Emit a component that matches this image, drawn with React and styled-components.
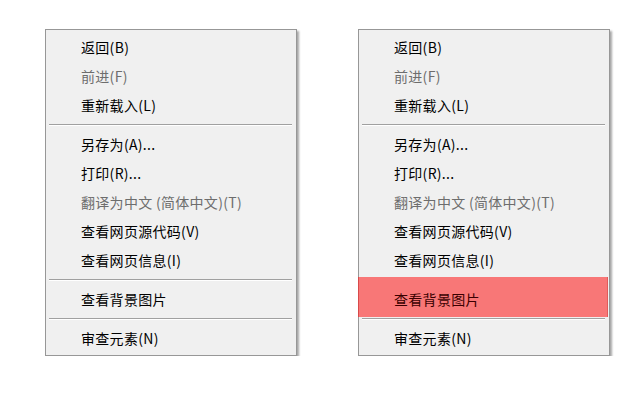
import React from 'react';
import styled, { createGlobalStyle } from 'styled-components';

const GlobalStyle = createGlobalStyle`
	html, body {
		margin: 0;
		background: #fff;
	}
`;

const Page = styled.div`
	display: flex;
	gap: 61px;
	padding: 29px 0 0 45px;
	font-family: "Noto Sans CJK SC", "Microsoft YaHei", sans-serif;
`;

const Menu = styled.div`
	box-sizing: border-box;
	width: 252px;
	padding: 3px 0 2px;
	background: #f0f0f0;
	border: 1px solid #979797;
	box-shadow: 2px 2px 2px rgba(0, 0, 0, 0.35);
`;

const Item = styled.div`
	position: relative;
	height: 29px;
	line-height: 29px;
	padding-left: 35px;
	font-size: 14px;
	letter-spacing: 0.3px;
	color: ${props => (props.disabled ? '#6d6d6d' : '#000')};
	white-space: nowrap;

	${props =>
		props.active &&
		`
		color: #3a0000;
		&::before {
			content: '';
			position: absolute;
			top: -8px;
			bottom: -3px;
			left: -1px;
			right: 1px;
			background: #f87777;
			border-left: 1px solid #d84a4a;
			border-right: 1px solid #e05a5a;
			z-index: 0;
		}
		span {
			position: relative;
			z-index: 1;
		}
	`}
`;

const Separator = styled.div`
	height: 10px;
	display: flex;
	align-items: center;
	padding: 0 4px 0 3px;

	&::after {
		content: '';
		flex: 1;
		border-top: 1px solid #a0a0a0;
		border-bottom: 1px solid #fff;
	}
`;

const groups = [
	[
		{ text: '返回(B)' },
		{ text: '前进(F)', disabled: true },
		{ text: '重新载入(L)' },
	],
	[
		{ text: '另存为(A)...' },
		{ text: '打印(R)...' },
		{ text: '翻译为中文 (简体中文)(T)', disabled: true },
		{ text: '查看网页源代码(V)' },
		{ text: '查看网页信息(I)' },
	],
	[{ text: '查看背景图片', key: 'bg' }],
	[{ text: '审查元素(N)' }],
];

const ContextMenu = ({ activeKey }) => (
	<Menu>
		{groups.map((group, gi) => (
			<React.Fragment key={gi}>
				{gi > 0 && <Separator />}
				{group.map(item => (
					<Item
						key={item.text}
						disabled={item.disabled}
						active={activeKey && item.key === activeKey}
					>
						<span>{item.text}</span>
					</Item>
				))}
			</React.Fragment>
		))}
	</Menu>
);

const App = () => (
	<>
		<GlobalStyle />
		<Page>
			<ContextMenu />
			<ContextMenu activeKey="bg" />
		</Page>
	</>
);

export default App;
